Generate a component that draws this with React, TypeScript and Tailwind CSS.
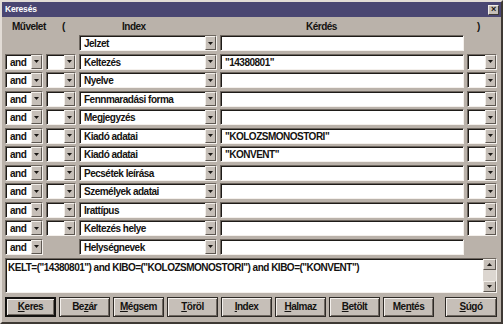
import React from "react";

const rows = [
  { op: false, lp: false, index: "Jelzet", q: "", rp: false },
  { op: true, lp: true, index: "Keltezés", q: "\"14380801\"", rp: true },
  { op: true, lp: true, index: "Nyelve", q: "", rp: true },
  { op: true, lp: true, index: "Fennmaradási forma", q: "", rp: true },
  { op: true, lp: true, index: "Megjegyzés", q: "", rp: true },
  { op: true, lp: true, index: "Kiadó adatai", q: "\"KOLOZSMONOSTORI\"", rp: true },
  { op: true, lp: true, index: "Kiadó adatai", q: "\"KONVENT\"", rp: true },
  { op: true, lp: true, index: "Pecsétek leírása", q: "", rp: true },
  { op: true, lp: true, index: "Személyek adatai", q: "", rp: true },
  { op: true, lp: true, index: "Irattípus", q: "", rp: true },
  { op: true, lp: true, index: "Keltezés helye", q: "", rp: true },
  { op: true, lp: false, index: "Helységnevek", q: "", rp: false },
];

const buttons: [string, string, string][] = [
  ["", "K", "eres"],
  ["Be", "z", "ár"],
  ["", "M", "égsem"],
  ["", "T", "öröl"],
  ["", "I", "ndex"],
  ["", "H", "almaz"],
  ["", "B", "etölt"],
  ["Me", "n", "tés"],
];

const Arrow = ({ up = false }: { up?: boolean }) => (
  <svg width="5" height="3" viewBox="0 0 5 3">
    <polygon points={up ? "0,3 5,3 2.5,0" : "0,0 5,0 2.5,3"} fill="#1a1714" />
  </svg>
);

const Sunken = ({ children }: { children?: React.ReactNode }) => (
  <div className="h-[16px] flex border border-t-[#6e6760] border-l-[#6e6760] border-b-[#f4f0ec] border-r-[#f4f0ec]">
    {children}
  </div>
);

const Combo = ({ text = "" }: { text?: string }) => (
  <Sunken>
    <div className="flex-1 min-w-0 bg-white shadow-[inset_1px_1px_0_#1e1b18] pl-[4px] pt-[1px] flex items-center whitespace-nowrap overflow-hidden">
      {text}
    </div>
    <div className="w-[11px] bg-[#c6bfb8] border border-t-[#f2eee9] border-l-[#f2eee9] border-b-[#5d5751] border-r-[#5d5751] flex items-center justify-center">
      <Arrow />
    </div>
  </Sunken>
);

const Field = ({ text = "" }: { text?: string }) => (
  <Sunken>
    <div className="flex-1 bg-white shadow-[inset_1px_1px_0_#1e1b18] pl-[4px] pt-[1px] flex items-center whitespace-nowrap">
      {text}
    </div>
  </Sunken>
);

export default function App() {
  return (
    <div className="w-[503px] h-[324px] flex flex-col bg-[#bab2aa] border-2 border-t-[#e2dcd6] border-l-[#e2dcd6] border-b-[#3e3934] border-r-[#3e3934] font-['Liberation_Sans',Arial,sans-serif] text-[10px] font-bold tracking-[-0.5px] text-[#141210] overflow-hidden">
      {/* title bar */}
      <div className="h-[15px] bg-[#4a4672] flex items-center justify-between pl-[3px] pr-[2px]">
        <span className="text-white text-[8.5px] tracking-[-0.2px]">Keresés</span>
        <div className="w-[11px] h-[10px] bg-[#c6bfb8] border border-t-[#f2eee9] border-l-[#f2eee9] border-b-[#3e3934] border-r-[#3e3934] flex items-center justify-center text-[9px] leading-none">
          ×
        </div>
      </div>

      <div className="flex-1 flex flex-col pl-[3px] pr-[2px]">
        {/* header */}
        <div className="h-[18px] grid grid-cols-[38px_30px_138px_244px_30px] gap-x-[3px] items-center pt-[1px]">
          <span className="pl-[7px] whitespace-nowrap">Művelet</span>
          <span className="pl-[16px]">(</span>
          <span className="pl-[43px]">Index</span>
          <span className="pl-[86px]">Kérdés</span>
          <span className="pl-[10px]">)</span>
        </div>

        {/* criteria rows */}
        <div className="grid grid-cols-[38px_30px_138px_244px_30px] gap-x-[3px] gap-y-[2.5px]">
          {rows.map((r, i) => (
            <React.Fragment key={i}>
              {r.op ? <Combo text="and" /> : <div />}
              {r.lp ? <Combo /> : <div />}
              <Combo text={r.index} />
              <Field text={r.q} />
              {r.rp ? <Combo /> : <div />}
            </React.Fragment>
          ))}
        </div>

        {/* expression box */}
        <div className="mt-[3px] w-[492px] h-[35px] flex border border-t-[#6e6760] border-l-[#6e6760] border-b-[#f4f0ec] border-r-[#f4f0ec]">
          <div className="flex-1 bg-white shadow-[inset_1px_1px_0_#1e1b18] pl-[2px] pt-[1px] whitespace-nowrap overflow-hidden">
            KELT=("14380801") and KIBO=("KOLOZSMONOSTORI") and KIBO=("KONVENT")
          </div>
          <div className="w-[13px] flex flex-col bg-[#dcd6d0]">
            <div className="h-[11px] bg-[#c6bfb8] border border-t-[#f2eee9] border-l-[#f2eee9] border-b-[#5d5751] border-r-[#5d5751] flex items-center justify-center">
              <Arrow up />
            </div>
            <div className="flex-1" />
            <div className="h-[11px] bg-[#c6bfb8] border border-t-[#f2eee9] border-l-[#f2eee9] border-b-[#5d5751] border-r-[#5d5751] flex items-center justify-center">
              <Arrow />
            </div>
          </div>
        </div>

        {/* buttons */}
        <div className="mt-[4px] flex w-[492px]">
          <div className="flex gap-x-[3px]">
            {buttons.map(([a, u, b], i) => (
              <div
                key={i}
                className={
                  "w-[51px] h-[20px] bg-[#c6bfb8] flex items-center justify-center shadow-[inset_1px_1px_0_#f4f0ec,inset_-1px_-1px_0_#6e6760] " +
                  (i === 0 ? "border-2 border-[#141210]" : "border border-[#2e2a26]")
                }
              >
                <span>
                  {a}
                  <span className="underline">{u}</span>
                  {b}
                </span>
              </div>
            ))}
          </div>
          <div className="ml-auto w-[52px] h-[20px] bg-[#c6bfb8] border border-[#2e2a26] flex items-center justify-center shadow-[inset_1px_1px_0_#f4f0ec,inset_-1px_-1px_0_#6e6760]">
            <span>
              <span className="underline">S</span>úgó
            </span>
          </div>
        </div>
      </div>
    </div>
  );
}
